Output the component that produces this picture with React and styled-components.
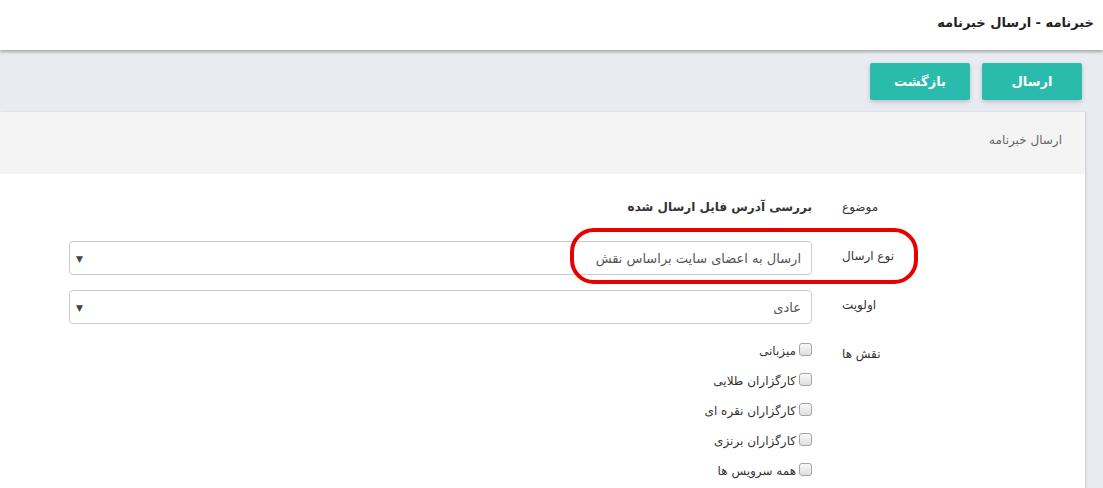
import React from "react";
import styled, { createGlobalStyle } from "styled-components";

const Global = createGlobalStyle`
  html, body { margin: 0; padding: 0; }
  body {
    background: #e8ebf0;
    font-family: "DejaVu Sans", "Noto Sans", sans-serif;
    color: #333;
    overflow: hidden;
  }
  * { box-sizing: border-box; }
`;

const Page = styled.div`
  direction: rtl;
  min-height: 488px;
  display: flex;
  flex-direction: column;
`;

const Header = styled.header`
  height: 50px;
  background: #fff;
  box-shadow: 0 2px 3px rgba(0, 0, 0, 0.28);
  display: flex;
  align-items: center;
  padding: 0 9px 5px;
  position: relative;
  z-index: 2;
`;

const Title = styled.h1`
  margin: 0;
  font-size: 13px;
  font-weight: bold;
  color: #222;
`;

const Toolbar = styled.div`
  display: flex;
  gap: 12px;
  padding: 13px 21px 12px;
`;

const Button = styled.button`
  width: 100px;
  height: 37px;
  border: none;
  border-radius: 2px;
  background: #2bbbad;
  color: #fff;
  font-family: inherit;
  font-size: 13px;
  font-weight: bold;
  box-shadow: 0 2px 5px rgba(0, 0, 0, 0.18);
  cursor: pointer;
`;

const Panel = styled.section`
  margin-right: 18px;
  flex: 1;
  background: #fff;
  box-shadow: 1px 0 2px rgba(0, 0, 0, 0.12);
  display: flex;
  flex-direction: column;
`;

const PanelHeading = styled.div`
  height: 62px;
  background: #f4f4f4;
  padding: 21px 23px 0 0;
  font-size: 12px;
  color: #666;
`;

const PanelBody = styled.div`
  padding-top: 18px;
`;

const Row = styled.div`
  position: relative;
  display: flex;
  gap: 30px;
  margin-bottom: ${(p) => (p.$tight ? 0 : 15)}px;
`;

const Label = styled.label`
  flex: 0 0 243px;
  text-align: left;
  padding-top: 8px;
  font-size: 12px;
  color: #333;
`;

const Control = styled.div`
  flex: 0 0 743px;
  min-height: 34px;
`;

const StaticValue = styled.div`
  padding-top: 8px;
  font-size: 12px;
  font-weight: bold;
  color: #333;
`;

const Select = styled.div`
  height: 34px;
  border: 1px solid #ccc;
  border-radius: 4px;
  display: flex;
  align-items: center;
  justify-content: space-between;
  padding: 0 10px 0 6px;
  font-size: 13px;
  color: #555;
  background: #fff;
`;

const Caret = styled.span`
  font-size: 9px;
  color: #444;
  margin-top: 1px;
`;

const Highlight = styled.div`
  position: absolute;
  top: -13px;
  right: 167px;
  width: 348px;
  height: 56px;
  border: 4px solid #e60000;
  border-radius: 24px;
  pointer-events: none;
`;

const CheckList = styled.div`
  padding-top: 4px;
  display: flex;
  flex-direction: column;
`;

const CheckItem = styled.label`
  height: 30px;
  display: flex;
  align-items: flex-start;
  gap: 3px;
  font-size: 12px;
  color: #333;
`;

const Box = styled.span`
  width: 13px;
  height: 13px;
  border: 1px solid #a5a5a5;
  border-radius: 3px;
  background: linear-gradient(#fafafa, #dedede);
  flex: 0 0 auto;
`;

const CheckText = styled.span`
  margin-top: 1px;
`;

const roles = ["میزبانی", "کارگزاران طلایی", "کارگزاران نقره ای", "کارگزاران برنزی", "همه سرویس ها"];

export default function App() {
  return (
    <Page>
      <Global />
      <Header>
        <Title>خبرنامه - ارسال خبرنامه</Title>
      </Header>
      <Toolbar>
        <Button>ارسال</Button>
        <Button>بازگشت</Button>
      </Toolbar>
      <Panel>
        <PanelHeading>ارسال خبرنامه</PanelHeading>
        <PanelBody>
          <Row>
            <Label>موضوع</Label>
            <Control>
              <StaticValue>بررسی آدرس فایل ارسال شده</StaticValue>
            </Control>
          </Row>
          <Row>
            <Label>نوع ارسال</Label>
            <Control>
              <Select>
                <span>ارسال به اعضای سایت براساس نقش</span>
                <Caret>▼</Caret>
              </Select>
            </Control>
            <Highlight />
          </Row>
          <Row>
            <Label>اولویت</Label>
            <Control>
              <Select>
                <span>عادی</span>
                <Caret>▼</Caret>
              </Select>
            </Control>
          </Row>
          <Row $tight>
            <Label>نقش ها</Label>
            <Control>
              <CheckList>
                {roles.map((r) => (
                  <CheckItem key={r}>
                    <Box />
                    <CheckText>{r}</CheckText>
                  </CheckItem>
                ))}
              </CheckList>
            </Control>
          </Row>
        </PanelBody>
      </Panel>
    </Page>
  );
}
